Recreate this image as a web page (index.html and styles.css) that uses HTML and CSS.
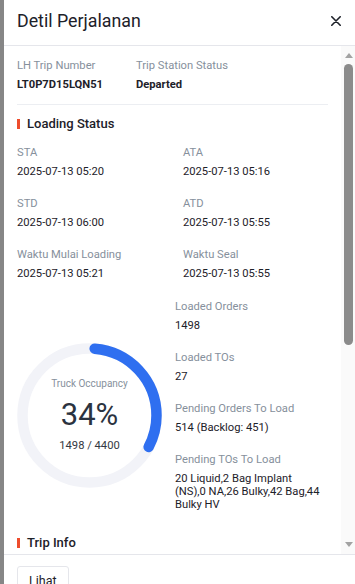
FILE: index.html
```html
<!DOCTYPE html>
<html lang="id">
<head>
<meta charset="utf-8">
<title>Detil Perjalanan</title>
<link rel="stylesheet" href="styles.css">
</head>
<body>
<div class="page">
  <div class="backdrop"></div>
  <aside class="drawer">
    <header class="drawer-header">
      <h1 class="drawer-title">Detil Perjalanan</h1>
      <button class="close" aria-label="Tutup">
        <svg width="10" height="10" viewBox="0 0 10 10"><path d="M0.8 0.8 L9.2 9.2 M9.2 0.8 L0.8 9.2" stroke="#1d2129" stroke-width="1.6" stroke-linecap="round" fill="none"/></svg>
      </button>
    </header>
    <div class="drawer-body">
      <div class="body-content">
        <div class="info-row">
          <div class="field">
            <div class="label">LH Trip Number</div>
            <div class="value strong">LT0P7D15LQN51</div>
          </div>
          <div class="field">
            <div class="label">Trip Station Status</div>
            <div class="value strong">Departed</div>
          </div>
        </div>

        <section class="section">
          <h2 class="section-title">Loading Status</h2>
          <div class="grid2">
            <div class="field"><div class="label">STA</div><div class="value">2025-07-13 05:20</div></div>
            <div class="field"><div class="label">ATA</div><div class="value">2025-07-13 05:16</div></div>
            <div class="field"><div class="label">STD</div><div class="value">2025-07-13 06:00</div></div>
            <div class="field"><div class="label">ATD</div><div class="value">2025-07-13 05:55</div></div>
            <div class="field"><div class="label">Waktu Mulai Loading</div><div class="value">2025-07-13 05:21</div></div>
            <div class="field"><div class="label">Waktu Seal</div><div class="value">2025-07-13 05:55</div></div>
          </div>
          <div class="occupancy">
            <div class="gauge">
              <svg class="gauge-svg" width="145" height="145" viewBox="0 0 145 145">
                <circle cx="72.5" cy="72.5" r="67" fill="none" stroke="#f2f3f8" stroke-width="10.5"/>
                <circle cx="72.5" cy="72.5" r="67" fill="none" stroke="#2f6ff0" stroke-width="10.5" stroke-linecap="round" stroke-dasharray="132.6 400" stroke-dashoffset="-5.25" transform="rotate(-90 72.5 72.5)"/>
              </svg>
              <div class="gauge-text">
                <div class="gauge-label">Truck Occupancy</div>
                <div class="gauge-pct">34%</div>
                <div class="gauge-sub">1498 / 4400</div>
              </div>
            </div>
            <div class="stats">
              <div class="field"><div class="label">Loaded Orders</div><div class="value">1498</div></div>
              <div class="field"><div class="label">Loaded TOs</div><div class="value">27</div></div>
              <div class="field"><div class="label">Pending Orders To Load</div><div class="value">514 (Backlog: 451)</div></div>
              <div class="field"><div class="label">Pending TOs To Load</div><div class="value">20 Liquid,2 Bag Implant (NS),0 NA,26 Bulky,42 Bag,44 Bulky HV</div></div>
            </div>
          </div>
        </section>

        <section class="section trip-info">
          <h2 class="section-title">Trip Info</h2>
        </section>
      </div>
      <div class="scrollbar" aria-hidden="true">
        <span class="sb-arrow sb-up"></span>
        <span class="sb-thumb"></span>
        <span class="sb-fill"></span>
        <span class="sb-arrow sb-down"></span>
      </div>
    </div>
    <footer class="drawer-footer">
      <button class="btn">Lihat</button>
    </footer>
  </aside>
</div>
</body>
</html>
```

FILE: styles.css
```css
html, body {
  margin: 0;
  padding: 0;
  overflow: hidden;
  background: #ffffff;
}

body {
  font-family: Roboto, "Noto Sans", "Liberation Sans", sans-serif;
  color: #1d2129;
}

.page {
  display: flex;
  width: 355px;
  height: 584px;
  overflow: hidden;
}

.backdrop {
  flex: none;
  width: 4px;
  background: #868686;
}

.drawer {
  flex: 1;
  min-width: 0;
  display: flex;
  flex-direction: column;
  background: #ffffff;
}

.drawer-header {
  flex: none;
  box-sizing: border-box;
  height: 46px;
  padding: 0 14px 4px 13px;
  display: flex;
  align-items: center;
  justify-content: space-between;
  border-bottom: 1px solid #e5e6eb;
}

.drawer-title {
  margin: 0;
  font-size: 17.8px;
  font-weight: 400;
  color: #1d2129;
  line-height: 22px;
}

.close {
  display: flex;
  align-items: center;
  justify-content: center;
  width: 10px;
  height: 10px;
  padding: 0;
  border: 0;
  background: none;
}

.drawer-body {
  flex: none;
  height: 508px;
  display: flex;
}

.body-content {
  flex: 1;
  min-width: 0;
  overflow: hidden;
  padding: 12px 13px 0 13px;
}

.scrollbar {
  flex: none;
  width: 14px;
  box-sizing: border-box;
  padding: 7px 0 7px 0;
  background: #fafafa;
  display: flex;
  flex-direction: column;
  align-items: center;
}

.sb-arrow {
  flex: none;
  width: 0;
  height: 0;
  margin-left: 1px;
  border-left: 4px solid transparent;
  border-right: 4px solid transparent;
}

.sb-up {
  border-bottom: 5px solid #a3a3a3;
}

.sb-down {
  border-top: 5px solid #a3a3a3;
}

.sb-thumb {
  flex: none;
  width: 9px;
  height: 281px;
  margin-top: 6px;
  margin-left: 1px;
  border-radius: 4.5px;
  background: #8b8b8b;
}

.sb-fill {
  flex: 1;
}

.field .label {
  font-size: 11.2px;
  line-height: 16px;
  color: #86909c;
  white-space: nowrap;
}

.field .value {
  margin-top: 4px;
  font-size: 11.2px;
  line-height: 13px;
  color: #1d2129;
}

.field .value.strong {
  font-weight: 700;
}

.info-row {
  display: grid;
  grid-template-columns: 119px 1fr;
  padding-bottom: 13px;
  border-bottom: 1px solid #eceef2;
}

.section-title {
  margin: 9px 0 11px 0;
  display: flex;
  align-items: center;
  font-size: 13px;
  font-weight: 500;
  line-height: 20px;
  color: #1d2129;
}

.section-title::before {
  content: "";
  flex: none;
  width: 3px;
  height: 10px;
  margin-right: 7px;
  background: #ee4d2d;
}

.grid2 {
  display: grid;
  grid-template-columns: 166px 1fr;
  row-gap: 18px;
}

.occupancy {
  margin-top: 18px;
  display: grid;
  grid-template-columns: 145px 1fr;
  column-gap: 13px;
  align-items: start;
}

.gauge {
  position: relative;
  width: 145px;
  height: 145px;
  margin-top: 45px;
}

.gauge-svg {
  display: block;
}

.gauge-text {
  position: absolute;
  inset: 0;
  display: flex;
  flex-direction: column;
  align-items: center;
  justify-content: center;
}

.gauge-label {
  font-size: 10px;
  line-height: 12px;
  color: #86909c;
}

.gauge-pct {
  margin-top: 7px;
  font-size: 31px;
  line-height: 36px;
  color: #2b3340;
}

.gauge-sub {
  margin-top: 6px;
  font-size: 11.2px;
  line-height: 14px;
  color: #333842;
}

.stats {
  display: flex;
  flex-direction: column;
  gap: 18px;
  padding-top: 1px;
  padding-right: 6px;
}

.trip-info .section-title {
  margin-top: 22px;
}

.drawer-footer {
  flex: none;
  border-top: 1px solid #e5e6eb;
  padding: 11px 13px 12px 13px;
}

.btn {
  height: 28px;
  padding: 0 11px;
  border: 1px solid #e5e6eb;
  border-radius: 3px;
  background: #ffffff;
  font-family: Roboto, "Noto Sans", sans-serif;
  font-size: 12.5px;
  color: #1d2129;
}
```
